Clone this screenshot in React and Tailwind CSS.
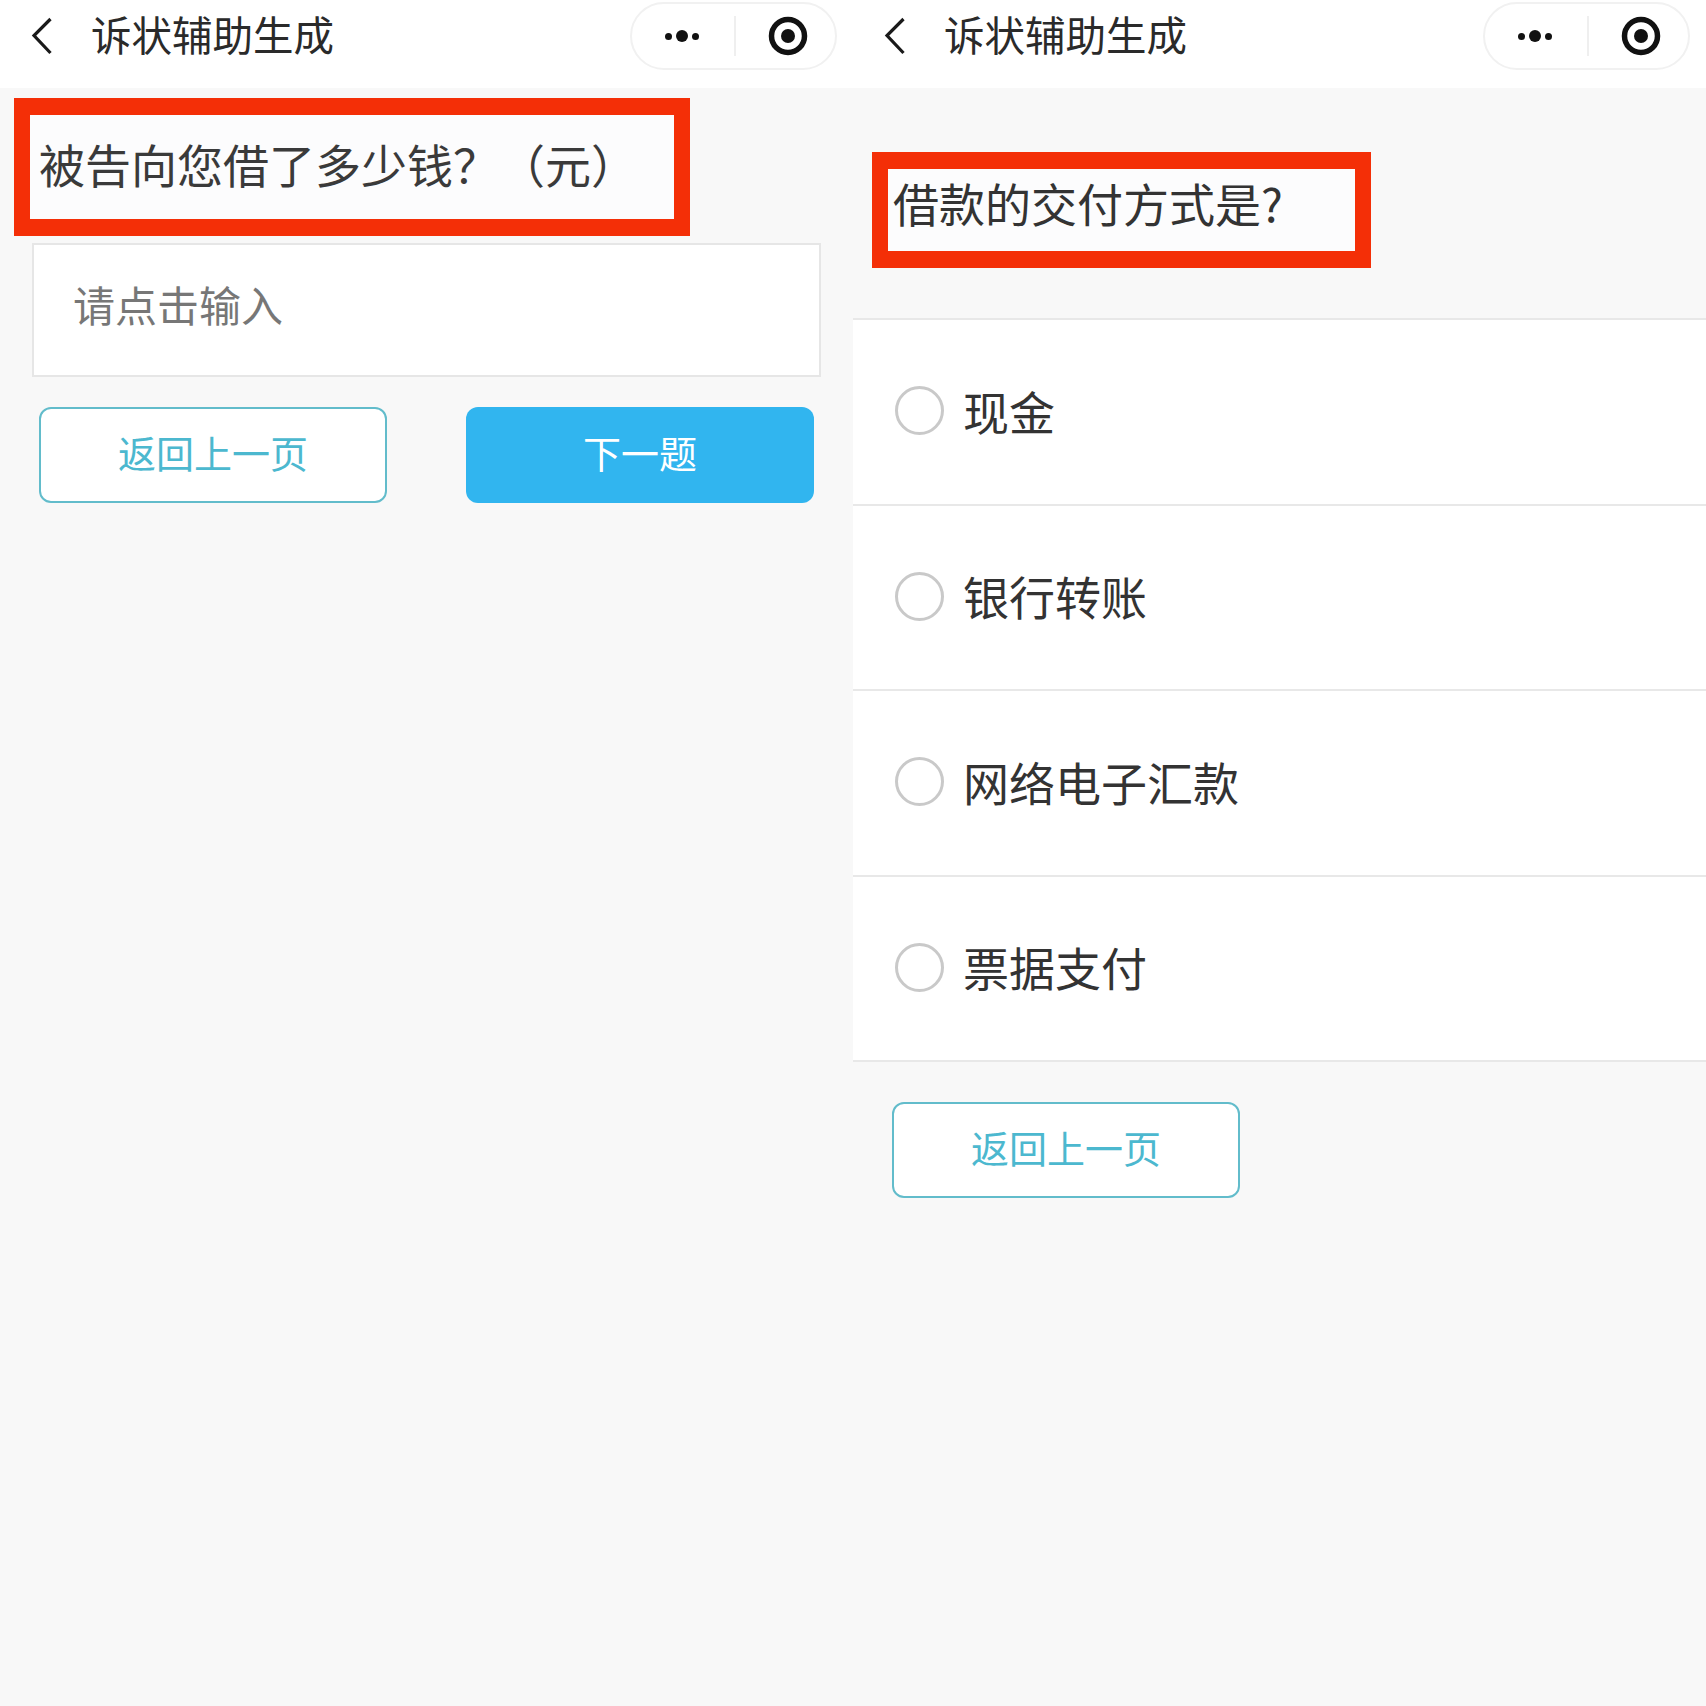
import React from "react";

const cjk = "font-['Noto_Sans_CJK_SC','Noto_Sans',sans-serif]";

function NavBar() {
  return (
    <div className="h-[88px] bg-white flex items-center pl-[31px] pr-[16px] pb-[16px]">
      <svg width="22" height="38" viewBox="0 0 22 38" fill="none" className="shrink-0">
        <path d="M19.5 2 L3 18.5 L19.5 36" stroke="#1a1a1a" strokeWidth="3.2" />
      </svg>
      <span className="ml-[38px] pb-[3px] text-[40.5px] leading-none text-[#2a2a2a]">诉状辅助生成</span>
      <div className="ml-auto w-[207px] h-[68px] rounded-full border-2 border-[#f1f1f1] flex items-center">
        <div className="w-[102px] flex items-center justify-end pr-[35px] gap-[4px]">
          <span className="w-[7px] h-[7px] rounded-full bg-[#111]" />
          <span className="w-[12px] h-[12px] rounded-full bg-[#111]" />
          <span className="w-[7px] h-[7px] rounded-full bg-[#111]" />
        </div>
        <div className="w-[2px] h-[40px] bg-[#efefef]" />
        <svg width="40" height="40" viewBox="0 0 40 40" className="ml-[32px]">
          <circle cx="20" cy="20" r="16.5" fill="none" stroke="#111" strokeWidth="5.5" />
          <circle cx="20" cy="20" r="7" fill="#111" />
        </svg>
      </div>
    </div>
  );
}

function OutlineButton() {
  return (
    <button className="w-[348px] h-[96px] pb-[6px] rounded-[12px] border-[2.5px] border-[#62bccb] bg-white text-[38px] leading-none text-[#4cb8cf]">
      返回上一页
    </button>
  );
}

function RadioRow({ label }) {
  return (
    <div className="h-[185.5px] pb-[2px] bg-white border-b-2 border-[#e8e8e8] flex items-center pl-[42px]">
      <span className="w-[49px] h-[49px] rounded-full border-[3px] border-[#c9c9c9] bg-white shrink-0" />
      <span className="ml-[19px] pb-[2px] text-[46px] leading-none text-[#333]">{label}</span>
    </div>
  );
}

export default function App() {
  return (
    <div className={`${cjk} w-[1706px] h-[1706px] bg-[#f8f8f8] grid grid-cols-2 overflow-hidden`}>
      {/* left: amount question */}
      <div>
        <NavBar />
        <div className="ml-[14px] mt-[10px] w-[676px] h-[138px] border-x-[16px] border-y-[17px] border-[#f42f07] bg-[#fcfcfd] flex items-center pl-[9px] pb-[8px]">
          <span className="text-[46px] leading-none text-[#3a3a3a] whitespace-nowrap">被告向您借了多少钱？（元）</span>
        </div>
        <div className="ml-[32px] mt-[7px] w-[789px] h-[134px] bg-white border-2 border-[#e6e6e6] flex items-center pl-[39px] pb-[12px]">
          <span className="text-[42px] leading-none text-[#777]">请点击输入</span>
        </div>
        <div className="mt-[30px] mx-[39px] flex justify-between">
          <OutlineButton />
          <button className="w-[348px] h-[96px] pb-[6px] rounded-[12px] bg-[#31b5ef] text-[38px] leading-none text-white">
            下一题
          </button>
        </div>
      </div>

      {/* right: payment method question */}
      <div>
        <NavBar />
        <div className="ml-[19px] mt-[64px] w-[499px] h-[116px] border-x-[16px] border-y-[17px] border-[#f42f07] bg-[#fcfcfd] flex items-center pl-[5px] pb-[16px]">
          <span className="text-[46px] leading-none text-[#333] whitespace-nowrap">借款的交付方式是?</span>
        </div>
        <div className="mt-[50px] border-t-2 border-[#e8e8e8]">
          <RadioRow label="现金" />
          <RadioRow label="银行转账" />
          <RadioRow label="网络电子汇款" />
          <RadioRow label="票据支付" />
        </div>
        <div className="mt-[40px] ml-[39px]">
          <OutlineButton />
        </div>
      </div>
    </div>
  );
}
